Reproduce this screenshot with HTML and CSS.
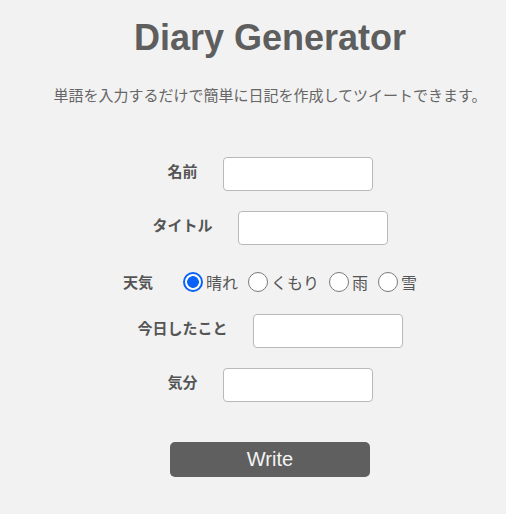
FILE: index.html
```html
<!DOCTYPE html>
<html lang="ja">
<head>
<meta charset="utf-8">
<title>Diary Generator</title>
<link rel="stylesheet" href="styles.css">
</head>
<body>
<main class="page">
  <h1 class="title">Diary Generator</h1>
  <p class="lead">単語を入力するだけで簡単に日記を作成してツイートできます。</p>
  <form class="form">
    <div class="row">
      <label class="label" for="name">名前</label>
      <input class="field" id="name" type="text">
    </div>
    <div class="row">
      <label class="label" for="title">タイトル</label>
      <input class="field" id="title" type="text">
    </div>
    <div class="row radio-row">
      <span class="label label-radio">天気</span>
      <div class="options">
        <label class="option"><input class="radio" type="radio" name="weather" checked><span>晴れ</span></label>
        <label class="option"><input class="radio" type="radio" name="weather"><span>くもり</span></label>
        <label class="option"><input class="radio" type="radio" name="weather"><span>雨</span></label>
        <label class="option"><input class="radio" type="radio" name="weather"><span>雪</span></label>
      </div>
    </div>
    <div class="row">
      <label class="label" for="done">今日したこと</label>
      <input class="field" id="done" type="text">
    </div>
    <div class="row">
      <label class="label" for="mood">気分</label>
      <input class="field" id="mood" type="text">
    </div>
    <button class="btn" type="button">Write</button>
  </form>
</main>
</body>
</html>
```

FILE: styles.css
```css
* { box-sizing: border-box; }

html, body {
  margin: 0;
  background: #f2f2f2;
}

body {
  font-family: "Noto Sans CJK JP", "Noto Sans", sans-serif;
  color: #555555;
}

.page {
  display: flex;
  flex-direction: column;
  align-items: center;
  padding: 17px 0 0 34px;
}

.title {
  margin: 0;
  font-family: "Liberation Sans", Arial, sans-serif;
  font-weight: 700;
  font-size: 36px;
  line-height: 41px;
  color: #5e5e5e;
}

.lead {
  margin: 26px 0 0;
  font-size: 15px;
  line-height: 22px;
  color: #666666;
}

.form {
  margin-top: 51px;
  display: flex;
  flex-direction: column;
  align-items: center;
  gap: 20px;
}

.row {
  display: flex;
  align-items: center;
  gap: 25px;
}

.label {
  font-weight: 700;
  font-size: 15px;
  line-height: 20px;
  color: #555555;
  margin-bottom: 6px;
}

.label-radio {
  margin-bottom: 0;
}

.field {
  width: 150px;
  height: 34px;
  margin: 0;
  background: #ffffff;
  border: 1px solid #b9b9b9;
  border-radius: 4px;
  padding: 0 6px;
  font-size: 14px;
}

.radio-row {
  margin: 7px 0 2px;
  height: 20px;
  gap: 25px;
}

.options {
  display: flex;
  align-items: center;
  gap: 5px;
}

.option {
  display: flex;
  align-items: center;
  font-size: 16px;
  line-height: 20px;
  color: #555555;
}

.radio {
  appearance: none;
  -webkit-appearance: none;
  width: 20px;
  height: 20px;
  margin: 0 3px 0 5px;
  border: 1px solid #7a7a7a;
  border-radius: 50%;
  background: #ffffff;
}

.radio:checked {
  border: 2px solid #0a63f6;
  background: radial-gradient(circle, #0a63f6 0 5.5px, #ffffff 6.2px);
}

.btn {
  margin-top: 20px;
  width: 200px;
  height: 35px;
  border: 0;
  border-radius: 5px;
  background: #5f5f5f;
  color: #f4f4f4;
  font-family: "Liberation Sans", Arial, sans-serif;
  font-size: 20px;
  padding: 0;
}
```
